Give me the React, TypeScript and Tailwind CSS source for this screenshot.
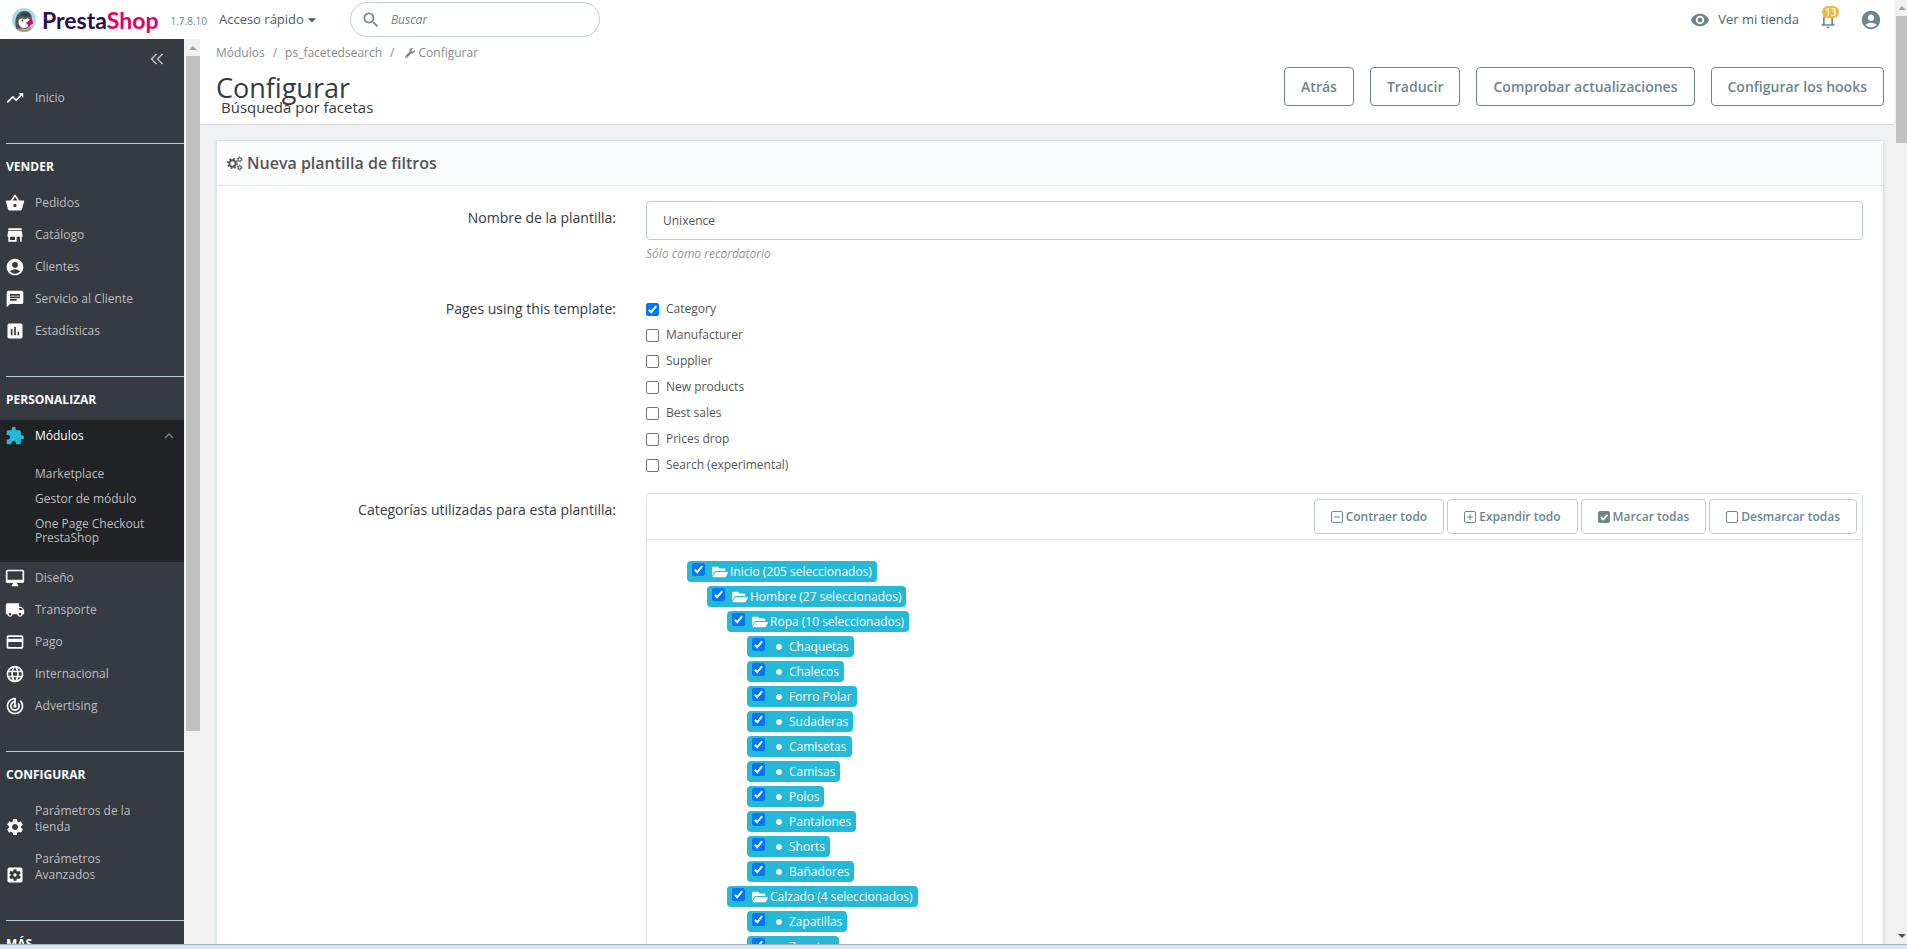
import type { ReactNode } from "react";
import {
  MdTrendingUp, MdShoppingBasket, MdStore, MdAccountCircle, MdChat, MdAssessment, MdExtension,
  MdOutlineDesktopMac, MdLocalShipping, MdPayment, MdLanguage, MdTrackChanges, MdSettings,
  MdSettingsApplications, MdKeyboardArrowUp, MdRemoveRedEye, MdNotificationsNone, MdSearch,
  MdArrowDropDown,
} from "react-icons/md";
import { FaWrench, FaFolderOpen, FaCircle } from "react-icons/fa";
import type { IconType } from "react-icons";

type NavEntry = { label: string; icon: IconType; wrap?: boolean };

const SELL: NavEntry[] = [
  { label: "Pedidos", icon: MdShoppingBasket },
  { label: "Catálogo", icon: MdStore },
  { label: "Clientes", icon: MdAccountCircle },
  { label: "Servicio al Cliente", icon: MdChat },
  { label: "Estadísticas", icon: MdAssessment },
];

const IMPROVE: NavEntry[] = [
  { label: "Diseño", icon: MdOutlineDesktopMac },
  { label: "Transporte", icon: MdLocalShipping },
  { label: "Pago", icon: MdPayment },
  { label: "Internacional", icon: MdLanguage },
  { label: "Advertising", icon: MdTrackChanges },
];

const CONFIGURE: NavEntry[] = [
  { label: "Parámetros de la tienda", icon: MdSettings, wrap: true },
  { label: "Parámetros Avanzados", icon: MdSettingsApplications, wrap: true },
];

const PAGES = ["Category", "Manufacturer", "Supplier", "New products", "Best sales", "Prices drop", "Search (experimental)"];

type TreeNode = { label: string; depth: number; folder?: boolean };

const TREE: TreeNode[] = [
  { label: "Inicio (205 seleccionados)", depth: 0, folder: true },
  { label: "Hombre (27 seleccionados)", depth: 1, folder: true },
  { label: "Ropa (10 seleccionados)", depth: 2, folder: true },
  { label: "Chaquetas", depth: 3 },
  { label: "Chalecos", depth: 3 },
  { label: "Forro Polar", depth: 3 },
  { label: "Sudaderas", depth: 3 },
  { label: "Camisetas", depth: 3 },
  { label: "Camisas", depth: 3 },
  { label: "Polos", depth: 3 },
  { label: "Pantalones", depth: 3 },
  { label: "Shorts", depth: 3 },
  { label: "Bañadores", depth: 3 },
  { label: "Calzado (4 seleccionados)", depth: 2, folder: true },
  { label: "Zapatillas", depth: 3 },
  { label: "Zapatos", depth: 3 },
];

const INDENT = ["", "ml-5", "ml-10", "ml-[60px]"];

function Checkbox({ id, checked }: { id: string; checked?: boolean }) {
  return (
    <span className="relative block size-[13px] shrink-0">
      <input
        id={id}
        type="checkbox"
        defaultChecked={checked}
        className="peer block size-[13px] appearance-none rounded-[2px] border border-[#767676] bg-white checked:border-[#0075ff] checked:bg-[#0075ff]"
      />
      <svg viewBox="0 0 13 13" className="pointer-events-none absolute inset-0 hidden size-[13px] peer-checked:block" aria-hidden="true">
        <path d="M2.8 6.8 5.2 9.2 10.2 3.2" fill="none" stroke="#fff" strokeWidth="2" />
      </svg>
    </span>
  );
}

function Penguin() {
  return (
    <svg viewBox="0 0 48 48" className="size-6 shrink-0" aria-hidden="true">
      <defs>
        <clipPath id="badge"><circle cx="24" cy="24" r="24" /></clipPath>
      </defs>
      <g clipPath="url(#badge)">
        <rect width="48" height="48" fill="#a4dbe8" />
        <path d="M8 48c0-6 5-10 12-9l16-1c5 1 8 6 8 10z" fill="#ad9b84" />
        <path d="M9 42C3 26 8 7 24 6c11 0 16 7 16 16l-4 14-8 5-12 0z" fill="#54585d" />
        <path d="M14 24c3-4 8-4 11-1 4-3 8-3 11 0 1 7-1 13-7 16-5 2-9 1-12-2-4-3-5-8-3-13z" fill="#fff" />
        <circle cx="21" cy="25" r="1.800" fill="#1d1d1b" />
        <path d="M14 17c5-3 9-2 12 1 3-2 7-2 10 0l-2-7-12-3z" fill="#3a3d42" />
        <path d="M28 29c4-1 8-6 9-9 3 2 5 6 5 12-4-1-6 2-8 6-2-4-4-6-6-9z" fill="#df0067" />
      </g>
    </svg>
  );
}

function Cogs() {
  return (
    <svg viewBox="0 0 16 15" className="h-[15px] w-4 shrink-0" fill="none" stroke="currentColor" aria-hidden="true">
      <circle cx="5.500" cy="7.500" r="3.200" strokeWidth="2" />
      <circle cx="5.500" cy="7.500" r="4.700" strokeWidth="1.500" strokeDasharray="1.850 1.841" />
      <circle cx="12.700" cy="3.400" r="1.600" strokeWidth="1.100" />
      <circle cx="12.700" cy="3.400" r="2.500" strokeWidth="0.900" strokeDasharray="1.310 1.308" />
      <circle cx="12.700" cy="11.600" r="1.600" strokeWidth="1.100" />
      <circle cx="12.700" cy="11.600" r="2.500" strokeWidth="0.900" strokeDasharray="1.310 1.308" />
    </svg>
  );
}

type BoxKind = "minus" | "plus" | "check" | "empty";

function BoxIcon({ kind }: { kind: BoxKind }) {
  return (
    <svg viewBox="0 0 12 12" className="size-3 shrink-0" fill="none" stroke="currentColor" aria-hidden="true">
      <rect x="0.500" y="0.500" width="11" height="11" rx="1.500" fill={kind === "check" ? "currentColor" : "none"} />
      {(kind === "minus" || kind === "plus") && <path d="M3 6h6" />}
      {kind === "plus" && <path d="M6 3v6" />}
      {kind === "check" && <path d="M2.800 6 5.200 8.400 9.400 3.800" stroke="#fff" strokeWidth="1.800" />}
    </svg>
  );
}

function Heading({ children }: { children: ReactNode }) {
  return (
    <h2 className="ml-1.5 border-t border-[#bbcdd2] pt-[13px] text-xs leading-5 font-bold text-white uppercase">{children}</h2>
  );
}

function NavItem({ item }: { item: NavEntry }) {
  const Icon = item.icon;
  return (
    <li>
      <a href="#" className="flex items-end gap-2.5 py-1.5 pl-[5px] text-xs leading-4 text-[#bebebe]">
        <Icon className="size-5 shrink-0 text-white" />
        <span className={item.wrap ? "w-[110px] py-0.5" : "py-0.5"}>{item.label}</span>
      </a>
    </li>
  );
}

function Sidebar() {
  return (
    <div className="flex w-[200px] shrink-0 overflow-hidden">
      <nav className="flex w-[184px] shrink-0 flex-col bg-[#363a41]">
        <button type="button" aria-label="Contraer menú" className="mt-3 mr-5 flex h-4 shrink-0 items-center self-end text-[#bebebe]">
          <svg viewBox="0 0 14 12" className="h-3 w-3.5" aria-hidden="true">
            <path d="M6.500 1 1.500 6l5 5M12.500 1l-5 5 5 5" fill="none" stroke="currentColor" strokeWidth="1.500" />
          </svg>
        </button>
        <ul className="mt-[15px]">
          <NavItem item={{ label: "Inicio", icon: MdTrendingUp }} />
        </ul>
        <div className="mt-[29px]">
          <Heading>Vender</Heading>
          <ul className="mt-2.5">{SELL.map((i) => <NavItem key={i.label} item={i} />)}</ul>
        </div>
        <div className="mt-[29px]">
          <Heading>Personalizar</Heading>
          <div className="mt-2.5 bg-[#202226] pb-[17px]">
            <a href="#" className="flex items-center gap-2.5 py-1.5 pr-1.5 pl-[5px] text-xs leading-5 text-white">
              <MdExtension className="size-5 text-[#25b9d7]" />
              <span className="grow font-medium">Módulos</span>
              <MdKeyboardArrowUp className="size-[18px] text-[#6c868e]" />
            </a>
            <ul className="mt-[15px] flex flex-col gap-[11px] pl-[35px] text-xs leading-3.5 text-[#bebebe]">
              <li className="h-3.5"><a href="#">Marketplace</a></li>
              <li className="h-3.5"><a href="#">Gestor de módulo</a></li>
              <li className="h-7 w-[120px]"><a href="#">One Page Checkout PrestaShop</a></li>
            </ul>
          </div>
          <ul>{IMPROVE.map((i) => <NavItem key={i.label} item={i} />)}</ul>
        </div>
        <div className="mt-[29px]">
          <Heading>Configurar</Heading>
          <ul className="mt-2.5">{CONFIGURE.map((i) => <NavItem key={i.label} item={i} />)}</ul>
        </div>
        <div className="mt-[29px]">
          <Heading>Más</Heading>
        </div>
      </nav>
      <div className="flex grow flex-col items-end bg-[#f1f1f1]" aria-hidden="true">
        <div className="flex h-[17px] w-[14px] items-center justify-center">
          <ScrollArrow />
        </div>
        <div className="h-[675px] w-[14px] shrink-0 bg-[#c1c1c1]" />
      </div>
    </div>
  );
}

function ScrollArrow({ down }: { down?: boolean }) {
  return (
    <svg viewBox="0 0 8 4" className="h-1 w-2" aria-hidden="true">
      <path d={down ? "M0 0h8L4 4z" : "M0 4h8L4 0z"} fill={down ? "#505050" : "#a3a3a3"} />
    </svg>
  );
}

function TopBar() {
  return (
    <header className="flex h-[39px] shrink-0 items-center bg-white pl-3">
      <Penguin />
      <span className="ml-1.5 font-[Lato] text-[23px] leading-6 font-bold text-[#250f4f]">
        Presta<span className="text-[#df0067]">Shop</span>
      </span>
      <span className="mt-1 ml-3 text-[10px] text-[#6c868e]">1.7.8.10</span>
      <button type="button" className="ml-3 flex items-center text-[13px] text-[#4e6167]">
        Acceso rápido
        <MdArrowDropDown className="-ml-0.5 size-5" />
      </button>
      <label className="ml-7 flex h-[35px] w-[250px] items-center rounded-full border border-[#bbcdd2] pl-2.5">
        <MdSearch className="size-5 text-[#6c868e]" />
        <input type="text" aria-label="Buscar" placeholder="Buscar" className="ml-2.5 w-[180px] text-xs italic outline-none placeholder:text-[#6c868e]" />
      </label>
      <div className="ml-auto flex items-center pr-3 text-[#6c868e]">
        <a href="#" className="flex items-center gap-2 text-[13px] text-[#4e6167]">
          <MdRemoveRedEye className="size-5 text-[#6c868e]" />
          Ver mi tienda
        </a>
        <button type="button" aria-label="Notificaciones" className="relative ml-[19px]">
          <MdNotificationsNone className="size-5" />
          <span className="absolute -top-1 left-1 rounded-full bg-[#f4b33d] px-[3px] text-[10px] leading-3 font-semibold text-white">13</span>
        </button>
        <button type="button" aria-label="Perfil" className="ml-[22px]">
          <MdAccountCircle className="size-[22px]" />
        </button>
      </div>
    </header>
  );
}

function PageHead() {
  const actions = ["Atrás", "Traducir", "Comprobar actualizaciones", "Configurar los hooks"];
  return (
    <div className="flex h-[86px] shrink-0 items-start justify-between border-b border-[#d8d8d8] bg-white pr-2.5 pl-4">
      <div>
        <nav aria-label="Ruta" className="mt-1 flex items-center gap-2 text-xs leading-5 text-[#8a8a8a]">
          <a href="#">Módulos</a>
          <span>/</span>
          <a href="#">ps_facetedsearch</a>
          <span>/</span>
          <span className="flex items-center gap-1"><FaWrench className="ml-0.5 size-2.5" />Configurar</span>
        </nav>
        <h1 className="mt-[7px] text-[27px] leading-9 text-[#363a41]">Configurar</h1>
        <p className="-mt-[9px] pl-[5px] text-[15px] leading-5 text-[#363a41]">Búsqueda por facetas</p>
      </div>
      <div className="mt-7 flex gap-4">
        {actions.map((a) => (
          <button key={a} type="button" className="h-[39px] rounded-[4px] border border-[#6c868e] px-4 text-sm font-semibold text-[#6c868e]">{a}</button>
        ))}
      </div>
    </div>
  );
}

function Row({ label, htmlFor, children }: { label: string; htmlFor?: string; children: ReactNode }) {
  return (
    <div className="grid grid-cols-[minmax(0,1fr)_minmax(0,3fr)]">
      <label htmlFor={htmlFor} className="pt-[7px] pr-[25px] text-right text-sm leading-5 text-[#363a41]">{label}</label>
      <div className="min-w-0 px-[5px]">{children}</div>
    </div>
  );
}

function CategoryTree() {
  const tools: [string, BoxKind][] = [
    ["Contraer todo", "minus"],
    ["Expandir todo", "plus"],
    ["Marcar todas", "check"],
    ["Desmarcar todas", "empty"],
  ];
  return (
    <div className="rounded-[5px] border border-[#dbdfe1]">
      <div className="flex h-[46px] items-start justify-end gap-[3px] border-b border-[#dbdfe1] pt-[5px] pr-[5px]">
        {tools.map(([label, kind]) => (
          <button key={label} type="button" className="flex h-[35px] items-center gap-[3px] rounded-[4px] border border-[#bbcdd2] px-4 text-xs font-semibold text-[#6c868e]">
            <BoxIcon kind={kind} />
            {label}
          </button>
        ))}
      </div>
      <ul className="flex flex-col items-start gap-1 pt-[21px] pl-10">
        {TREE.map((n) => (
          <li key={n.label} className={INDENT[n.depth]}>
            <label className="flex h-[21px] items-center rounded-[4px] bg-[#25b9d7] px-[5px] text-xs text-white">
              <span className="self-start pt-0.5"><Checkbox id={`cat-${n.label}`} checked /></span>
              {n.folder ? <FaFolderOpen className="mr-0.5 ml-[7px] size-4" /> : <FaCircle className="mr-[7px] ml-[11px] size-1.5" />}
              {n.label}
            </label>
          </li>
        ))}
      </ul>
    </div>
  );
}

export default function App() {
  return (
    <div className="flex h-screen flex-col overflow-hidden bg-[#eff1f2] font-['Open_Sans',sans-serif]">
      <div className="flex min-h-0 grow">
        <div className="flex min-w-0 grow flex-col">
          <TopBar />
          <div className="flex min-h-0 grow">
            <Sidebar />
            <div className="flex min-w-0 grow flex-col">
              <PageHead />
              <main className="min-h-0 grow overflow-hidden pt-[15px] pr-2.5 pl-4">
                <section className="border border-[#dbe6e9] bg-white shadow-sm">
                  <h2 className="flex h-[45px] items-center gap-1 border-b border-[#dbe6e9] bg-[#fafbfc] px-2.5 text-base font-semibold text-[#555]">
                    <Cogs />
                    Nueva plantilla de filtros
                  </h2>
                  <form className="px-[15px] pt-[15px]">
                    <Row label="Nombre de la plantilla:" htmlFor="tpl-name">
                      <input id="tpl-name" defaultValue="Unixence" className="block h-[39px] w-full rounded-[4px] border border-[#bbcdd2] px-4 text-xs text-[#555]" />
                      <p className="mt-1 mb-7 text-xs leading-5 text-[#959595] italic">Sólo como recordatorio</p>
                    </Row>
                    <Row label="Pages using this template:">
                      <ul className="pt-[7px] pb-3">
                        {PAGES.map((p, i) => (
                          <li key={p} className="flex h-[26px] items-start gap-[7px]">
                            <span className="pt-1"><Checkbox id={`page-${i}`} checked={i === 0} /></span>
                            <label htmlFor={`page-${i}`} className="text-xs leading-5 text-[#555]">{p}</label>
                          </li>
                        ))}
                      </ul>
                    </Row>
                    <Row label="Categorías utilizadas para esta plantilla:">
                      <CategoryTree />
                    </Row>
                  </form>
                </section>
              </main>
            </div>
          </div>
        </div>
        <div className="flex w-[13px] shrink-0 flex-col items-end bg-[#f1f1f1]" aria-hidden="true">
          <div className="flex h-4 w-[11px] items-center justify-center"><ScrollArrow /></div>
          <div className="h-[127px] w-[11px] bg-[#c1c1c1]" />
          <div className="mt-auto flex h-4 w-[11px] items-center justify-center"><ScrollArrow down /></div>
        </div>
      </div>
      <footer className="h-[5px] shrink-0 border-t border-[#a9b0bd] bg-[#dbe6f5]" />
    </div>
  );
}
